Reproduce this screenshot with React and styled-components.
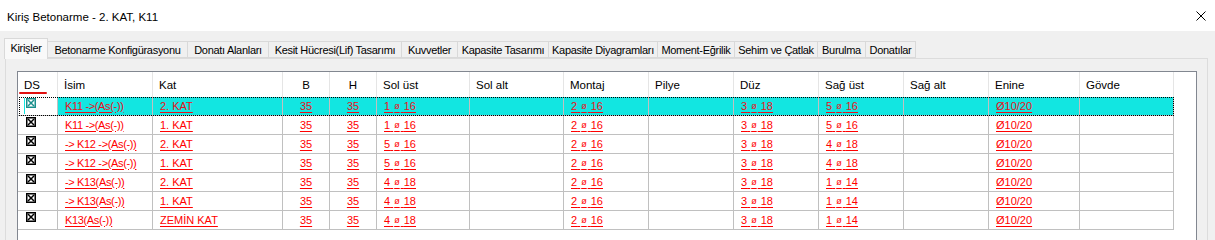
import React from 'react';
import styled, { createGlobalStyle } from 'styled-components';

const GlobalStyle = createGlobalStyle`
  html, body {
    margin: 0;
    padding: 0;
    background: #f0f0f0;
  }
  * {
    box-sizing: border-box;
  }
`;

const COLUMNS = '40px 95px 130px 47px 47px 93px 94px 85px 85px 85px 85px 85px 91px 94px';

const Window = styled.div`
  width: 1215px;
  height: 240px;
  overflow: hidden;
  display: flex;
  flex-direction: column;
  background: #f0f0f0;
  font-family: "Liberation Sans", Arial, sans-serif;
  font-size: 11px;
  color: #000;
`;

const TitleBar = styled.div`
  height: 31px;
  flex: none;
  background: #fff;
  display: flex;
  align-items: center;
  justify-content: space-between;
  padding: 0 9px 0 7px;

  span {
    font-size: 11.5px;
    padding-top: 2px;
  }
`;

const CloseButton = styled.div`
  width: 10px;
  height: 10px;
  display: flex;

  svg {
    display: block;
  }
`;

const Body = styled.div`
  flex: 1;
  display: flex;
  flex-direction: column;
  padding: 7px 7px 0 4px;
  min-height: 0;
`;

const TabStrip = styled.div`
  display: flex;
  align-items: flex-end;
  height: 20px;
  flex: none;
  position: relative;
  z-index: 1;
`;

const Tab = styled.div`
  height: ${p => (p.$active ? '21px' : '17px')};
  margin-bottom: ${p => (p.$active ? '-1px' : '0')};
  border: 1px solid #d9d9d9;
  border-bottom: ${p => (p.$active ? 'none' : '1px solid #d9d9d9')};
  border-left: ${p => (p.$first || p.$active ? '1px solid #d9d9d9' : 'none')};
  background: ${p => (p.$active ? '#f9f9f9' : '#f0f0f0')};
  display: flex;
  align-items: center;
  justify-content: center;
  white-space: nowrap;
  letter-spacing: -0.3px;
  padding-bottom: ${p => (p.$active ? '3px' : '0')};
  flex: none;
`;

const TabPanel = styled.div`
  flex: 1;
  margin-left: 1px;
  border: 1px solid #dcdcdc;
  border-bottom: none;
  background: #f0f0f0;
  padding: 12px 10px 0 11px;
  display: flex;
  min-height: 0;
`;

const Grid = styled.div`
  flex: 1;
  background: #fff;
  border: 1px solid #828790;
  border-bottom: none;
`;

const HeaderRow = styled.div`
  display: grid;
  grid-template-columns: ${COLUMNS};
  height: 25px;
`;

const HeaderCell = styled.div`
  position: relative;
  border-right: 1px solid #e5e5e5;
  display: flex;
  align-items: center;
  justify-content: ${p => (p.$center ? 'center' : 'flex-start')};
  padding: 1px ${p => (p.$center ? '0' : '6px')} 0;
  white-space: nowrap;
  font-size: 11.5px;

  ${p =>
    p.$sorted &&
    `
    &::after {
      content: '';
      position: absolute;
      left: 1px;
      bottom: 3px;
      width: 28px;
      height: 2px;
      border-radius: 1px;
      background: #e01010;
    }
  `}
`;

const Row = styled.div`
  display: grid;
  grid-template-columns: ${COLUMNS};
  height: 19px;
  width: 1156px;
  position: relative;

  ${p =>
    p.$selected &&
    `
    &::after {
      content: '';
      position: absolute;
      left: 1px;
      top: 0;
      right: 0;
      bottom: 0;
      border: 1px dotted #000;
      pointer-events: none;
    }
  `}
`;

const Cell = styled.div`
  border-right: 1px solid #c0c0c0;
  border-bottom: 1px solid #c0c0c0;
  background: ${p => (p.$selected ? '#12e6e1' : '#fff')};
  display: flex;
  align-items: center;
  justify-content: ${p => (p.$center ? 'center' : 'flex-start')};
  padding: 0 ${p => (p.$center ? '0' : '7px')} 1px;
  white-space: nowrap;
  position: relative;
`;

const CheckCell = styled(Cell)`
  align-items: flex-start;
  padding: 1px 0 0 8px;
`;

const FocusMark = styled.span`
  position: absolute;
  left: 6px;
  top: 1px;
  bottom: 1px;
  width: 1px;
  background: #12e6e1;
`;

const Link = styled.span`
  color: ${p => (p.$selected ? '#e8101c' : '#ff0000')};
  text-decoration: underline;
  text-underline-offset: 2px;
  letter-spacing: ${p => (p.$tight ? '-0.35px' : '0')};
`;

const Dia = styled.span`
  font-size: 9px;
  margin: 0 1px;
  vertical-align: 1px;
`;

const TABS = [
  ['Kirişler', 44],
  ['Betonarme Konfigürasyonu', 140],
  ['Donatı Alanları', 81],
  ['Kesit Hücresi(Lif) Tasarımı', 133],
  ['Kuvvetler', 56],
  ['Kapasite Tasarımı', 91],
  ['Kapasite Diyagramları', 109],
  ['Moment-Eğrilik', 77],
  ['Sehim ve Çatlak', 83],
  ['Burulma', 48],
  ['Donatılar', 50],
];

const HEADERS = [
  'DS', 'İsim', 'Kat', 'B', 'H', 'Sol üst', 'Sol alt', 'Montaj', 'Pilye',
  'Düz', 'Sağ üst', 'Sağ alt', 'Enine', 'Gövde',
];

const ROWS = [
  ['K11 ->(As(-))', '2. KAT', '1-16', '2-16', '3-18', '5-16'],
  ['K11 ->(As(-))', '1. KAT', '1-16', '2-16', '3-18', '5-16'],
  ['-> K12 ->(As(-))', '2. KAT', '5-16', '2-16', '3-18', '4-18'],
  ['-> K12 ->(As(-))', '1. KAT', '5-16', '2-16', '3-18', '4-18'],
  ['-> K13(As(-))', '2. KAT', '4-18', '2-16', '3-18', '1-14'],
  ['-> K13(As(-))', '1. KAT', '4-18', '2-16', '3-18', '1-14'],
  ['K13(As(-))', 'ZEMİN KAT', '4-18', '2-16', '3-18', '1-14'],
];

const CheckBox = ({ color }) => (
  <svg width="10" height="10" viewBox="0 0 10 10">
    <rect x="0.75" y="0.75" width="8.5" height="8.5" fill="none" stroke={color} strokeWidth="1.5" />
    <path d="M2 2 L8 8 M8 2 L2 8" stroke={color} strokeWidth="1.5" />
  </svg>
);

const Bar = ({ value, selected }) => {
  const [count, dia] = value.split('-');
  return (
    <Link $selected={selected}>
      {count} <Dia>ø</Dia> {dia}
    </Link>
  );
};

const App = () => (
  <Window>
    <GlobalStyle />
    <TitleBar>
      <span>Kiriş Betonarme - 2. KAT, K11</span>
      <CloseButton>
        <svg width="10" height="10" viewBox="0 0 10 10">
          <path d="M0.5 0.5 L9.5 9.5 M9.5 0.5 L0.5 9.5" stroke="#000" strokeWidth="1" />
        </svg>
      </CloseButton>
    </TitleBar>

    <Body>
      <TabStrip>
        {TABS.map(([label, width], i) => (
          <Tab key={label} $active={i === 0} $first={i === 0} style={{ width }}>
            {label}
          </Tab>
        ))}
      </TabStrip>

      <TabPanel>
        <Grid>
          <HeaderRow>
            {HEADERS.map((h, i) => (
              <HeaderCell key={h} $center={i === 3 || i === 4} $sorted={i === 0}>
                {h}
              </HeaderCell>
            ))}
          </HeaderRow>

          {ROWS.map(([name, kat, solUst, montaj, duz, sagUst], r) => {
            const sel = r === 0;
            return (
              <Row key={r} $selected={sel}>
                <CheckCell>
                  {sel && <FocusMark />}
                  <CheckBox color={sel ? '#1b8f8c' : '#000'} />
                </CheckCell>
                <Cell $selected={sel}><Link $selected={sel} $tight>{name}</Link></Cell>
                <Cell $selected={sel}><Link $selected={sel}>{kat}</Link></Cell>
                <Cell $selected={sel} $center><Link $selected={sel}>35</Link></Cell>
                <Cell $selected={sel} $center><Link $selected={sel}>35</Link></Cell>
                <Cell $selected={sel}><Bar value={solUst} selected={sel} /></Cell>
                <Cell $selected={sel} />
                <Cell $selected={sel}><Bar value={montaj} selected={sel} /></Cell>
                <Cell $selected={sel} />
                <Cell $selected={sel}><Bar value={duz} selected={sel} /></Cell>
                <Cell $selected={sel}><Bar value={sagUst} selected={sel} /></Cell>
                <Cell $selected={sel} />
                <Cell $selected={sel}><Link $selected={sel}>Ø10/20</Link></Cell>
                <Cell $selected={sel} />
              </Row>
            );
          })}
        </Grid>
      </TabPanel>
    </Body>
  </Window>
);

export default App;
